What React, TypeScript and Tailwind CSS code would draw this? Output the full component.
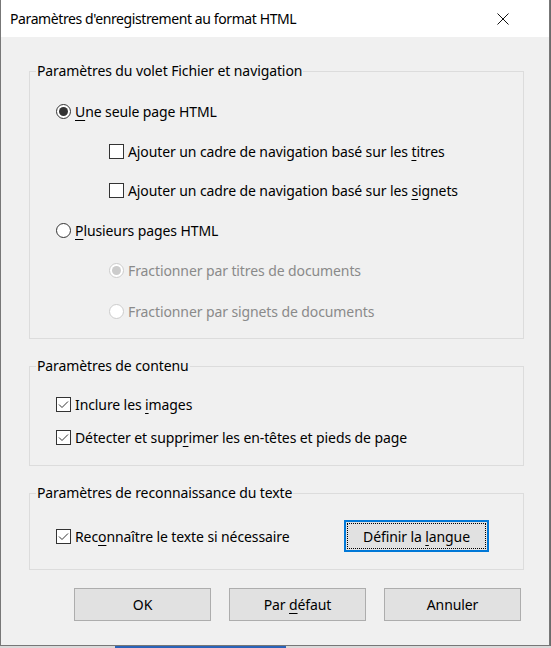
import React from "react";

const FONT = { fontFamily: '"Noto Sans", "Open Sans", Arial, sans-serif' };

function Radio({ checked, disabled }: { checked?: boolean; disabled?: boolean }) {
  return (
    <span
      className={`flex h-[15px] w-[15px] shrink-0 items-center justify-center rounded-full border bg-white ${
        disabled ? "border-[#cccccc]" : "border-[#333333]"
      }`}
    >
      {checked && (
        <span
          className={`h-[9px] w-[9px] rounded-full ${disabled ? "bg-[#cccccc]" : "bg-[#333333]"}`}
        />
      )}
    </span>
  );
}

function Check({ checked }: { checked?: boolean }) {
  return (
    <span className="flex h-[15px] w-[15px] shrink-0 items-center justify-center border border-[#333333] bg-white">
      {checked && (
        <svg width="13" height="13" viewBox="0 0 13 13">
          <path d="M2 6.5 L5 9.5 L11 3.5" fill="none" stroke="#333333" strokeWidth="1" />
        </svg>
      )}
    </span>
  );
}

function U({ children }: { children: React.ReactNode }) {
  return <span className="underline underline-offset-[3px] decoration-1">{children}</span>;
}

function Group({ label, children, className = "" }: { label: string; children: React.ReactNode; className?: string }) {
  return (
    <fieldset className={`ml-[28px] w-[495px] border border-[#dcdcdc] ${className}`}>
      <legend className="ml-[6px] px-[1px] text-[14px] leading-[20px] tracking-[-0.1px] text-black">{label}</legend>
      {children}
    </fieldset>
  );
}

export default function App() {
  return (
    <div className="relative h-[648px] w-[551px] bg-[#6b6b6b]" style={FONT}>
      <div className="flex h-[646px] w-[550px] flex-col border-x border-b border-[#777777] bg-[#f0f0f0]">
        {/* Title bar */}
        <div className="flex h-[37px] shrink-0 items-center justify-between bg-white pl-[9px] pr-[40px]">
          <span className="text-[14px] tracking-[-0.4px] text-black">Paramètres d'enregistrement au format HTML</span>
          <svg width="12" height="12" viewBox="0 0 12 12">
            <path d="M0.5 0.5 L11.5 11.5 M11.5 0.5 L0.5 11.5" stroke="#111111" strokeWidth="1" />
          </svg>
        </div>

        <div className="flex flex-col pt-[24px] text-[14px] tracking-[-0.1px] text-black">
          {/* Group 1 */}
          <Group label="Paramètres du volet Fichier et navigation" className="pb-[7px] pt-[10px]">
            <div className="flex h-[40px] items-center gap-[4px] pl-[26px]">
              <Radio checked />
              <span>
                <U>U</U>ne seule page HTML
              </span>
            </div>
            <div className="flex h-[40px] items-center gap-[4px] pl-[79px]">
              <Check />
              <span>
                Ajouter un cadre de navigation basé sur les <U>t</U>itres
              </span>
            </div>
            <div className="flex h-[39px] items-center gap-[4px] pl-[79px]">
              <Check />
              <span>
                Ajouter un cadre de navigation basé sur les <U>s</U>ignets
              </span>
            </div>
            <div className="flex h-[40px] items-center gap-[4px] pl-[26px]">
              <Radio />
              <span>
                <U>P</U>lusieurs pages HTML
              </span>
            </div>
            <div className="flex h-[41px] items-center gap-[4px] pl-[79px] text-[#8a8a8a]">
              <Radio checked disabled />
              <span>Fractionner par titres de documents</span>
            </div>
            <div className="flex h-[40px] items-center gap-[4px] pl-[79px] text-[#8a8a8a]">
              <Radio disabled />
              <span>Fractionner par signets de documents</span>
            </div>
          </Group>

          {/* Group 2 */}
          <Group label="Paramètres de contenu" className="mt-[17px] pb-[11px] pt-[12px]">
            <div className="flex h-[33px] items-center gap-[4px] pl-[26px]">
              <Check checked />
              <span>
                Inclure les <U>i</U>mages
              </span>
            </div>
            <div className="flex h-[33px] items-center gap-[4px] pl-[26px]">
              <Check checked />
              <span>
                Détecter et supp<U>r</U>imer les en-têtes et pieds de page
              </span>
            </div>
          </Group>

          {/* Group 3 */}
          <Group label="Paramètres de reconnaissance du texte" className="mt-[17px] pb-[17px] pt-[17px]">
            <div className="flex h-[32px] items-center justify-between pl-[26px] pr-[34px]">
              <div className="flex items-center gap-[4px]">
                <Check checked />
                <span>
                  Rec<U>o</U>nnaître le texte si nécessaire
                </span>
              </div>
              <button className="flex h-[32px] w-[145px] items-center justify-center border-2 border-[#0078d7] bg-[#e1e1e1] p-[1px]">
                <span className="flex h-full w-full items-center justify-center border border-dotted border-black">
                  <span>
                    Définir la <U>l</U>angue
                  </span>
                </span>
              </button>
            </div>
          </Group>

          {/* Buttons */}
          <div className="mt-[18px] flex justify-end gap-[18px] pr-[28px]">
            <button className="h-[33px] w-[137px] border border-[#adadad] bg-[#e1e1e1]">OK</button>
            <button className="h-[33px] w-[137px] border border-[#adadad] bg-[#e1e1e1]">
              Par <U>d</U>éfaut
            </button>
            <button className="h-[33px] w-[137px] border border-[#adadad] bg-[#e1e1e1]">Annuler</button>
          </div>
        </div>
      </div>
      <div className="flex h-[2px] w-[551px]">
        <div className="w-[115px] bg-[#dadada]" />
        <div className="w-[171px] bg-[#2a63b8]" />
        <div className="flex-1 bg-[#dadada]" />
      </div>
    </div>
  );
}
